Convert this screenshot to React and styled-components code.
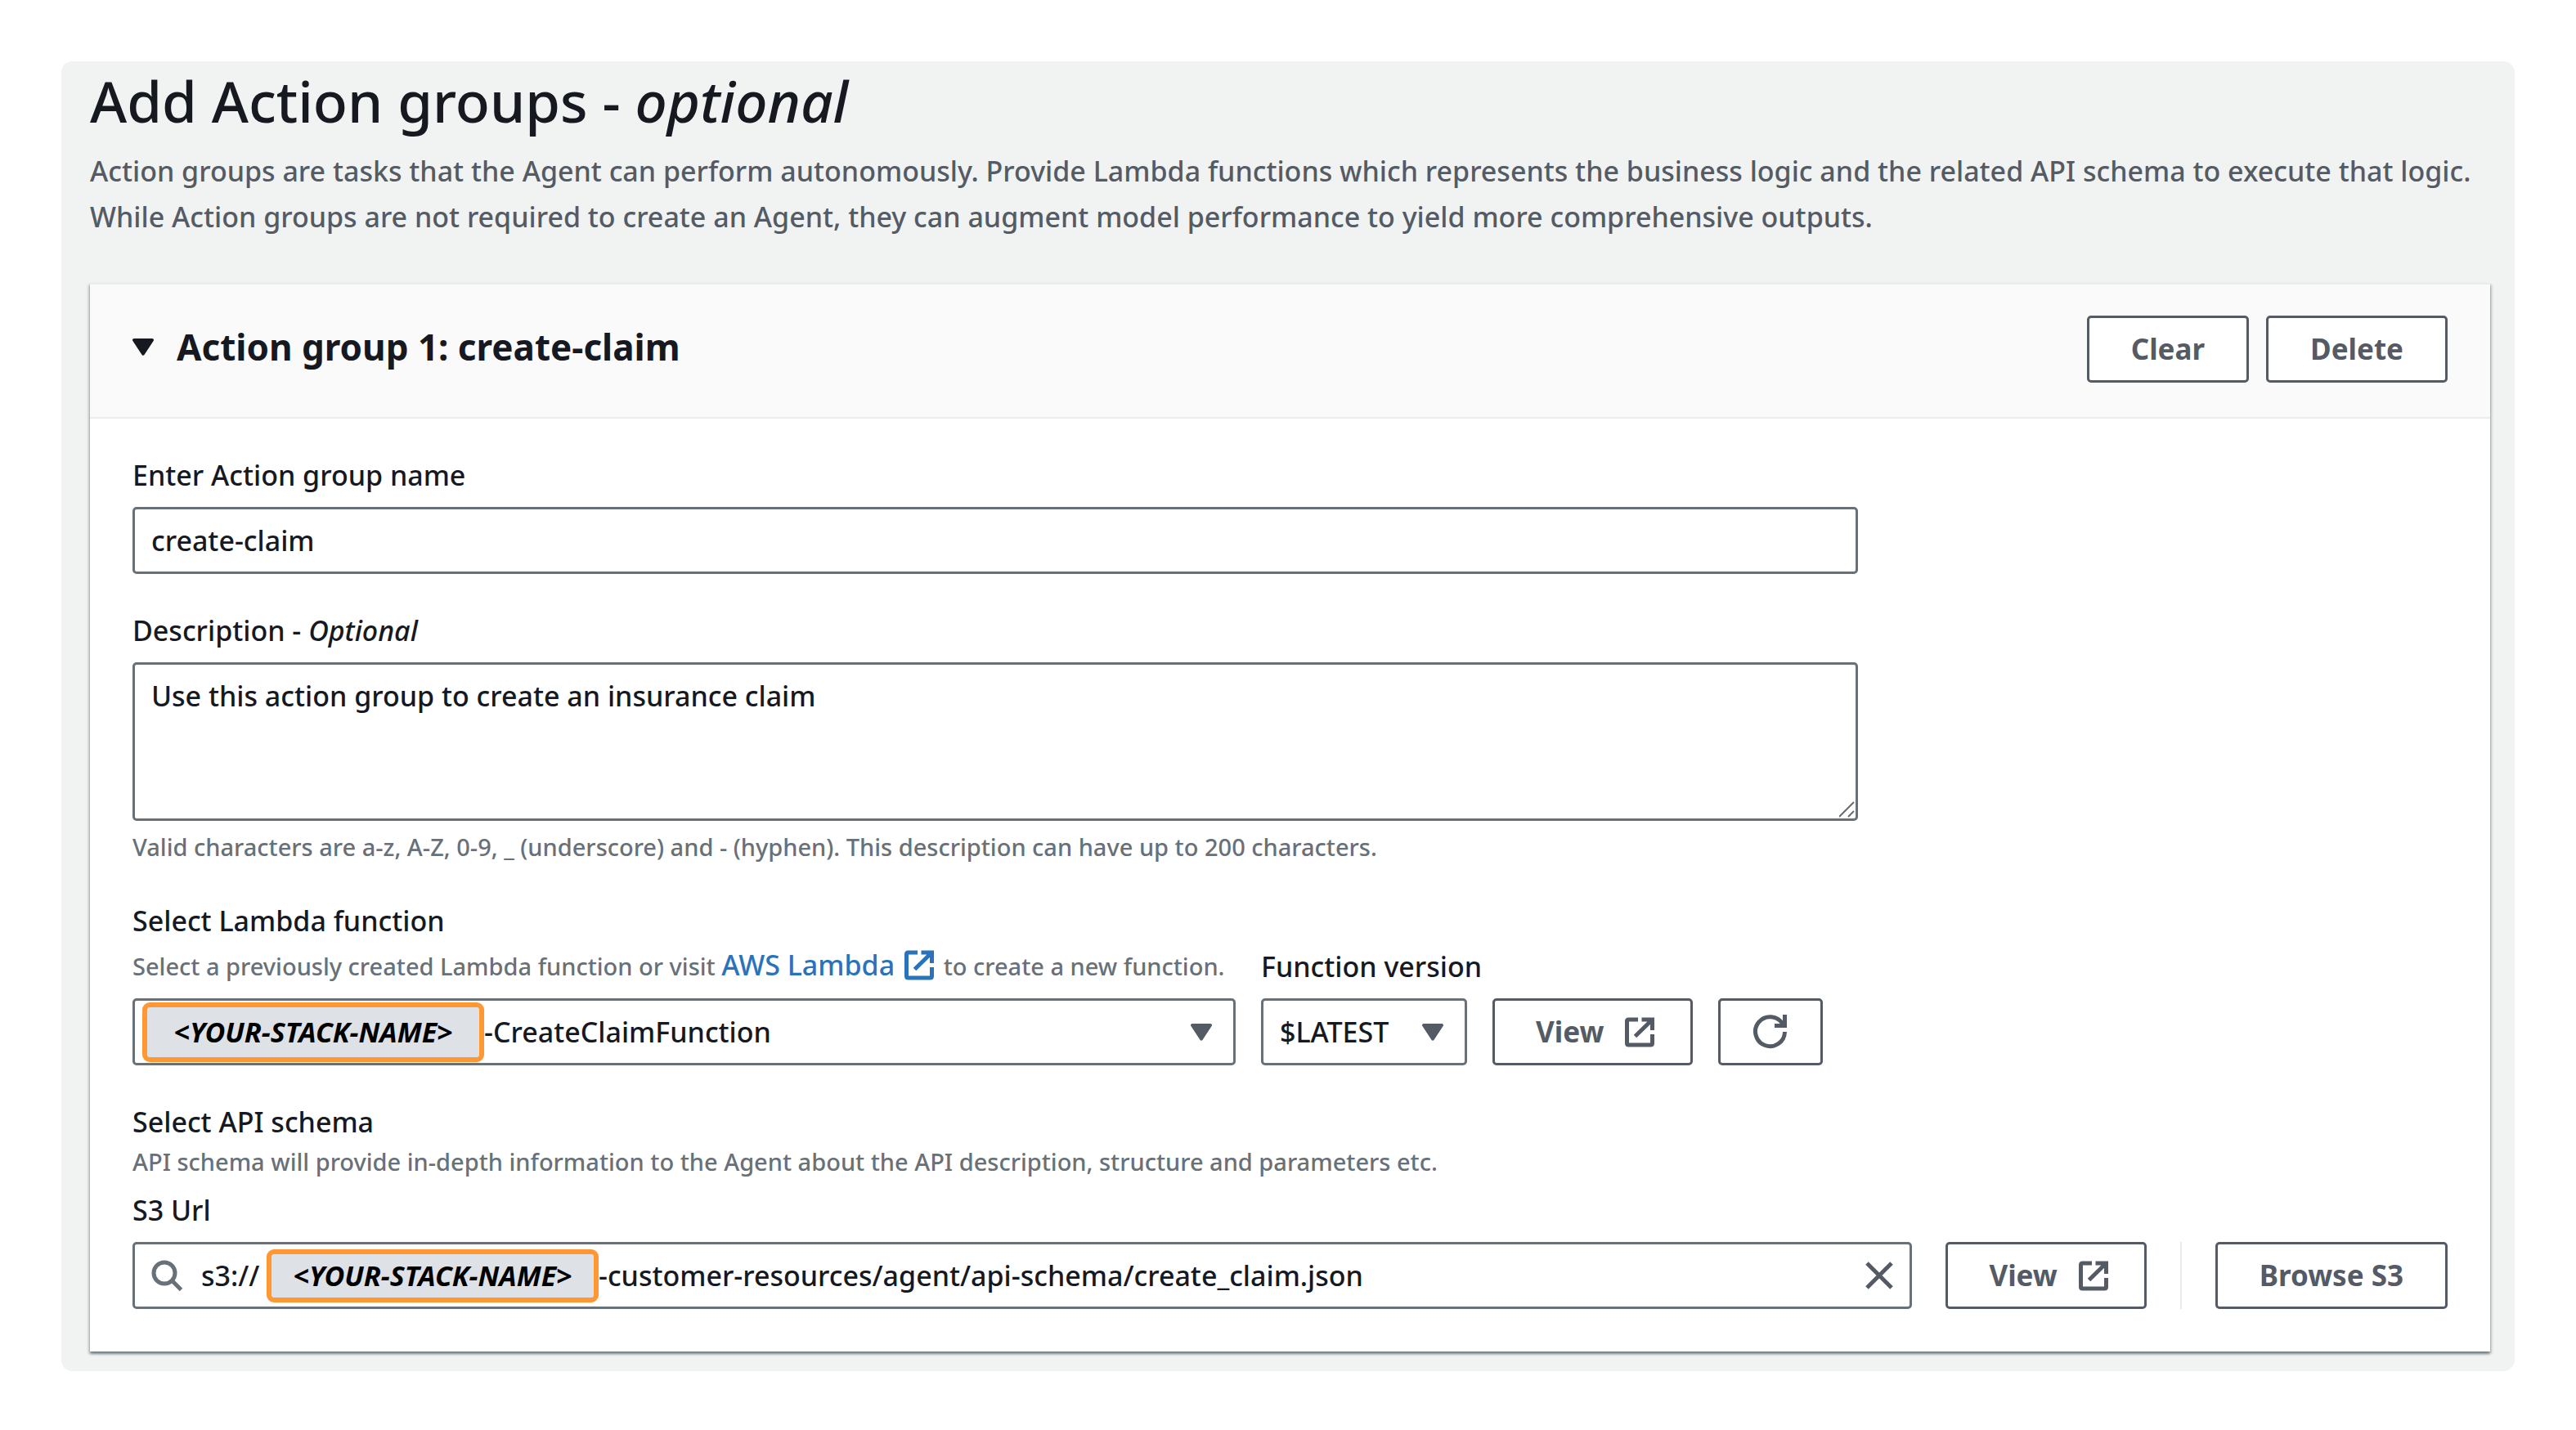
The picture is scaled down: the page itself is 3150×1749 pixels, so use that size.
import React, { useState } from "react";
import styled, { createGlobalStyle, css } from "styled-components";

const color = {
  ink: "#16191f",
  body: "#545b64",
  muted: "#687078",
  link: "#2a73bb",
  line: "#eaeded",
  page: "#f1f3f3",
  tagLine: "#ff9732",
  tagFill: "#dee1e6",
};

const GlobalStyle = createGlobalStyle`
  *, *::before, *::after { box-sizing: border-box; }
  body {
    margin: 0;
    background: #ffffff;
    color: ${color.ink};
    font: 500 34px/56px "Noto Sans", "Open Sans", sans-serif;
  }
`;

const Page = styled.div`
  padding: 75px;
`;

const Panel = styled.main`
  padding: 0 30px 24px 35px;
  border-radius: 14px;
  background: ${color.page};
`;

const PageTitle = styled.h1`
  margin: 0 0 10px;
  font-size: 69px;
  font-weight: 500;
  line-height: 96px;
`;

const Intro = styled.p`
  margin: 0 0 53px;
  color: ${color.body};
`;

const Card = styled.section`
  border-top: 2px solid ${color.line};
  background: #ffffff;
  box-shadow:
    0 3px 3px 0 rgba(0, 28, 36, 0.4),
    2px 2px 3px 0 rgba(0, 28, 36, 0.15),
    -2px 2px 3px 0 rgba(0, 28, 36, 0.15);
`;

const CardHeader = styled.header`
  display: flex;
  align-items: flex-start;
  justify-content: space-between;
  padding: 38px 52px 42px;
  border-bottom: 2px solid ${color.line};
  background: #fafafa;
`;

const CardTitle = styled.h2`
  margin: 0;
  font-size: 44px;
  font-weight: 700;
  line-height: 76px;
`;

const Toggle = styled.button`
  display: flex;
  align-items: center;
  gap: 28px;
  padding: 0;
  border: 0;
  background: none;
  color: inherit;
  font: inherit;
`;

const Actions = styled.div`
  display: flex;
  gap: 21px;
`;

const Button = styled.button`
  display: flex;
  flex: none;
  align-items: center;
  justify-content: center;
  gap: 26px;
  height: 82px;
  padding: ${(p) => (p.$square ? "0 40px" : p.$icon ? "0 44px 0 50px" : "0 51px")};
  border: 3px solid ${color.body};
  border-radius: 5px;
  background: #ffffff;
  color: ${color.body};
  font: inherit;
  font-size: 35px;
  font-weight: 700;
`;

const CardBody = styled.form`
  display: flex;
  flex-direction: column;
  gap: 41px;
  padding: 41px 52px 52px;
`;

const NarrowGrid = styled.div`
  display: grid;
  grid-template-columns: repeat(12, 1fr);
  gap: 41px 52px;

  & > * {
    grid-column: span 9;
  }
`;

const Field = styled.div`
  display: flex;
  flex-direction: column;
  min-width: 0;
`;

const Label = styled.label`
  align-self: flex-start;
  margin-bottom: ${(p) => (p.$tight ? "0" : "11px")};
  white-space: nowrap;
`;

const Hint = styled.p`
  margin: 0;
  color: ${color.muted};
  font-size: 29px;
  line-height: 42px;
`;

const FieldHint = styled(Hint)`
  margin-top: 11px;
`;

const LinkHint = styled(Hint)`
  margin-bottom: 11px;
  line-height: 56px;
  white-space: nowrap;
`;

const GroupHint = styled(Hint)`
  margin-bottom: 10px;
`;

const Link = styled.a`
  color: ${color.link};
  font-size: 34px;
  line-height: 40px;
  text-decoration: none;

  svg {
    margin: 0 4px 0 12px;
    vertical-align: -6px;
  }
`;

const control = css`
  width: 100%;
  border: 3px solid ${color.muted};
  border-radius: 5px;
  background: #ffffff;
  color: ${color.ink};
  font: inherit;
  outline: none;
`;

const TextInput = styled.input`
  ${control}
  height: 82px;
  padding: 0 20px;
`;

const AreaWrap = styled.div`
  position: relative;
  display: flex;
`;

const TextArea = styled.textarea`
  ${control}
  height: 194px;
  padding: 10px 20px;
  resize: none;
`;

const Grip = styled.svg`
  position: absolute;
  right: 3px;
  bottom: 4px;
`;

const LambdaRow = styled.div`
  display: flex;
  align-items: flex-end;
  gap: 31px;
`;

const LambdaField = styled(Field)`
  flex: 0 1 1349px;
`;

const VersionField = styled(Field)`
  flex: 0 0 252px;
`;

const SelectWrap = styled.div`
  position: relative;
  display: flex;
  align-items: center;
`;

const Select = styled.select`
  ${control}
  height: 82px;
  padding: 0 76px 0 ${(p) => (p.$tagged ? "427px" : "20px")};
  appearance: none;
`;

const SelectArrow = styled.span`
  position: absolute;
  right: 29px;
  display: flex;
  color: ${color.body};
  pointer-events: none;
`;

const Tag = styled.span`
  display: flex;
  flex: none;
  align-items: center;
  justify-content: center;
  width: ${(p) => (p.$large ? "418px" : "406px")};
  height: ${(p) => (p.$large ? "73px" : "65px")};
  border: 6px solid ${color.tagLine};
  border-radius: 9px;
  background: ${color.tagFill};
  color: #000000;
  font-size: 34px;
  font-style: italic;
  font-weight: 700;
  white-space: nowrap;
`;

const SelectTag = styled.span`
  position: absolute;
  left: 12px;
  pointer-events: none;
`;

const UrlRow = styled.div`
  display: flex;
  gap: 41px;
`;

const UrlBox = styled.div`
  ${control}
  display: flex;
  flex: 1;
  align-items: center;
  height: 82px;
  padding: 0 20px;
`;

const UrlPrefix = styled.span`
  min-width: 80px;
  margin-left: 22px;
`;

const UrlInput = styled.input`
  flex: 1;
  min-width: 0;
  height: 56px;
  padding: 0;
  border: 0;
  background: none;
  color: inherit;
  font: inherit;
  outline: none;
`;

const ClearButton = styled.button`
  display: flex;
  padding: 0;
  border: 0;
  background: none;
  color: ${color.body};
`;

const Divider = styled.div`
  flex: none;
  width: 2px;
  background: ${color.line};
`;

const CaretIcon = () => (
  <svg width="26" height="21" viewBox="0 0 26 21" fill="currentColor" aria-hidden="true">
    <path d="M2 0h22c1.7 0 2.6 1.7 1.6 3L14.6 19.8c-.8 1.3-2.4 1.3-3.2 0L.4 3C-.6 1.7.3 0 2 0z" />
  </svg>
);

const ExternalIcon = () => (
  <svg width="36" height="37" viewBox="0 0 36 37" fill="none" stroke="currentColor" strokeWidth="5" aria-hidden="true">
    <path d="M16 3H4.5Q2.5 3 2.5 5V32Q2.5 34 4.5 34H31.5Q33.5 34 33.5 32V21" />
    <path d="M20.5 3H33.5V16M33 3.5L12.5 23.5" />
    <path d="M26 4h8v8z" fill="currentColor" stroke="none" />
  </svg>
);

const RefreshIcon = () => (
  <svg width="42" height="42" viewBox="0 0 42 42" fill="none" stroke="currentColor" strokeWidth="5" aria-hidden="true">
    <path d="M38.5 21A18 18 0 1 1 36 11.5" />
    <path d="M38.5 0V13.5H26" />
    <path d="M32 14l6-6v6z" fill="currentColor" stroke="none" />
  </svg>
);

const SearchIcon = () => (
  <svg width="39" height="39" viewBox="0 0 39 39" fill="none" stroke={color.muted} strokeWidth="5" aria-hidden="true">
    <circle cx="16" cy="16" r="13" />
    <path d="M25 25L36.5 36.5" />
  </svg>
);

const CloseIcon = () => (
  <svg width="34" height="34" viewBox="0 0 34 34" fill="none" stroke="currentColor" strokeWidth="5" aria-hidden="true">
    <path d="M2 2L32 32M32 2L2 32" />
  </svg>
);

export default function App() {
  const [open, setOpen] = useState(true);
  const [name, setName] = useState("create-claim");
  const [description, setDescription] = useState("Use this action group to create an insurance claim");
  const [url, setUrl] = useState("-customer-resources/agent/api-schema/create_claim.json");

  return (
    <Page>
      <GlobalStyle />
      <Panel>
        <PageTitle>
          Add Action groups - <em>optional</em>
        </PageTitle>
        <Intro>
          Action groups are tasks that the Agent can perform autonomously. Provide Lambda functions which represents the
          business logic and the related API schema to execute that logic. While Action groups are not required to
          create an Agent, they can augment model performance to yield more comprehensive outputs.
        </Intro>

        <Card>
          <CardHeader>
            <CardTitle>
              <Toggle type="button" aria-expanded={open} onClick={() => setOpen(!open)}>
                <CaretIcon />
                Action group 1: create-claim
              </Toggle>
            </CardTitle>
            <Actions>
              <Button type="button">Clear</Button>
              <Button type="button">Delete</Button>
            </Actions>
          </CardHeader>

          {open && (
            <CardBody>
              <NarrowGrid>
                <Field>
                  <Label htmlFor="group-name">Enter Action group name</Label>
                  <TextInput id="group-name" value={name} onChange={(e) => setName(e.target.value)} />
                </Field>
                <Field>
                  <Label htmlFor="description">
                    Description - <em>Optional</em>
                  </Label>
                  <AreaWrap>
                    <TextArea
                      id="description"
                      value={description}
                      onChange={(e) => setDescription(e.target.value)}
                    />
                    <Grip width="20" height="20" viewBox="0 0 20 20" stroke="#6b6b6b" strokeWidth="2" aria-hidden="true">
                      <path d="M0 19L18 1M11 19L18 12" />
                    </Grip>
                  </AreaWrap>
                  <FieldHint>
                    Valid characters are a-z, A-Z, 0-9, _ (underscore) and - (hyphen). This description can have up to
                    200 characters.
                  </FieldHint>
                </Field>
              </NarrowGrid>

              <LambdaRow>
                <LambdaField>
                  <Label htmlFor="lambda" $tight>
                    Select Lambda function
                  </Label>
                  <LinkHint>
                    Select a previously created Lambda function or visit{" "}
                    <Link href="#lambda">
                      AWS Lambda
                      <ExternalIcon />
                    </Link>{" "}
                    to create a new function.
                  </LinkHint>
                  <SelectWrap>
                    <Select id="lambda" $tagged>
                      <option>-CreateClaimFunction</option>
                    </Select>
                    <SelectTag>
                      <Tag $large>&lt;YOUR-STACK-NAME&gt;</Tag>
                    </SelectTag>
                    <SelectArrow>
                      <CaretIcon />
                    </SelectArrow>
                  </SelectWrap>
                </LambdaField>
                <VersionField>
                  <Label htmlFor="version">Function version</Label>
                  <SelectWrap>
                    <Select id="version">
                      <option>$LATEST</option>
                    </Select>
                    <SelectArrow>
                      <CaretIcon />
                    </SelectArrow>
                  </SelectWrap>
                </VersionField>
                <Button type="button" $icon>
                  View
                  <ExternalIcon />
                </Button>
                <Button type="button" aria-label="Refresh" $square>
                  <RefreshIcon />
                </Button>
              </LambdaRow>

              <Field>
                <Label as="div" $tight>
                  Select API schema
                </Label>
                <GroupHint>
                  API schema will provide in-depth information to the Agent about the API description, structure and
                  parameters etc.
                </GroupHint>
                <Label htmlFor="s3-url">S3 Url</Label>
                <UrlRow>
                  <UrlBox>
                    <SearchIcon />
                    <UrlPrefix>s3://</UrlPrefix>
                    <Tag>&lt;YOUR-STACK-NAME&gt;</Tag>
                    <UrlInput id="s3-url" value={url} onChange={(e) => setUrl(e.target.value)} />
                    <ClearButton type="button" aria-label="Clear URL" onClick={() => setUrl("")}>
                      <CloseIcon />
                    </ClearButton>
                  </UrlBox>
                  <Button type="button" $icon>
                    View
                    <ExternalIcon />
                  </Button>
                  <Divider />
                  <Button type="button">Browse S3</Button>
                </UrlRow>
              </Field>
            </CardBody>
          )}
        </Card>
      </Panel>
    </Page>
  );
}
